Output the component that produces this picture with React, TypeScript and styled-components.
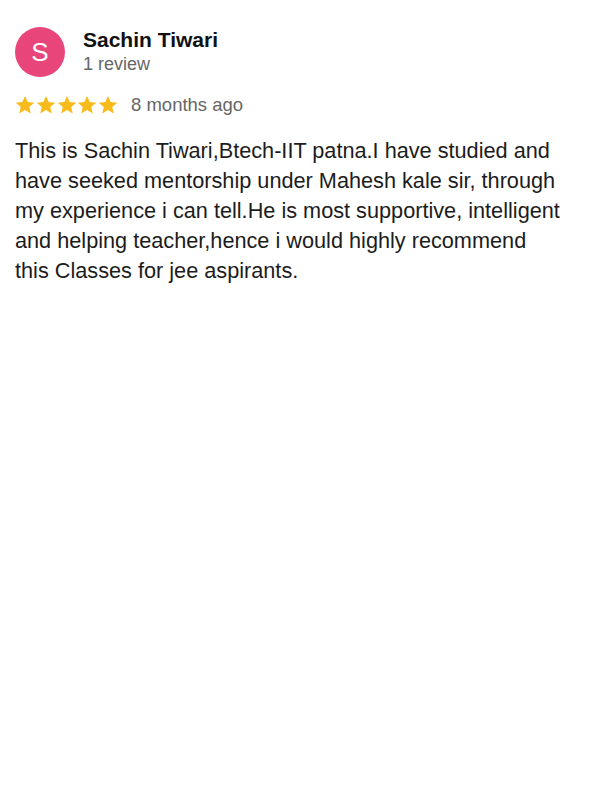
import React from "react";
import styled, { createGlobalStyle } from "styled-components";

const Global = createGlobalStyle`
  html, body { margin: 0; padding: 0; background: #fff; }
  body { font-family: "Liberation Sans", Arial, sans-serif; }
`;

const Page = styled.div`
  width: 600px;
  height: 800px;
  box-sizing: border-box;
  padding: 27px 15px 0 15px;
  background: #fff;
`;

const Header = styled.div`
  display: flex;
  align-items: flex-start;
  gap: 18px;
`;

const Avatar = styled.div`
  width: 50px;
  height: 50px;
  border-radius: 50%;
  background: #e8457a;
  color: #fff;
  display: flex;
  align-items: center;
  justify-content: center;
  font-size: 26px;
  flex-shrink: 0;
`;

const Info = styled.div`
  display: flex;
  flex-direction: column;
  padding-top: 1px;
`;

const Name = styled.div`
  font-size: 21px;
  font-weight: bold;
  color: #111;
  line-height: 24px;
`;

const Sub = styled.div`
  font-size: 18px;
  color: #666;
  line-height: 22px;
  margin-top: 1px;
`;

const RatingRow = styled.div`
  display: flex;
  align-items: center;
  gap: 13px;
  margin-top: 17px;
  height: 22px;
`;

const Stars = styled.div`
  display: flex;
  gap: 0.75px;
`;

const Time = styled.span`
  font-size: 18.5px;
  line-height: 22px;
  color: #666;
`;

const Body = styled.p`
  margin: 20px 0 0 0;
  font-size: 21.7px;
  line-height: 30px;
  color: #1c1c1c;
  white-space: nowrap;
`;

const Star = () => (
  <svg width="20" height="20" viewBox="0 0 24 24">
    <path
      d="M12 1.2l3.2 7.3 7.9.7-6 5.2 1.8 7.8L12 18.1l-6.9 4.1 1.8-7.8-6-5.2 7.9-.7z"
      fill="#f8bb1c"
    />
  </svg>
);

const lines = [
  "This is Sachin Tiwari,Btech-IIT patna.I have studied and",
  "have seeked mentorship under Mahesh kale sir, through",
  "my experience i can tell.He is most supportive, intelligent",
  "and helping teacher,hence i would highly recommend",
  "this Classes for jee aspirants.",
];

export default function App() {
  return (
    <>
      <Global />
      <Page>
        <Header>
          <Avatar>S</Avatar>
          <Info>
            <Name>Sachin Tiwari</Name>
            <Sub>1 review</Sub>
          </Info>
        </Header>
        <RatingRow>
          <Stars>
            {[0, 1, 2, 3, 4].map((i) => (
              <Star key={i} />
            ))}
          </Stars>
          <Time>8 months ago</Time>
        </RatingRow>
        <Body>
          {lines.map((l, i) => (
            <React.Fragment key={i}>
              {l}
              {i < lines.length - 1 && <br />}
            </React.Fragment>
          ))}
        </Body>
      </Page>
    </>
  );
}
